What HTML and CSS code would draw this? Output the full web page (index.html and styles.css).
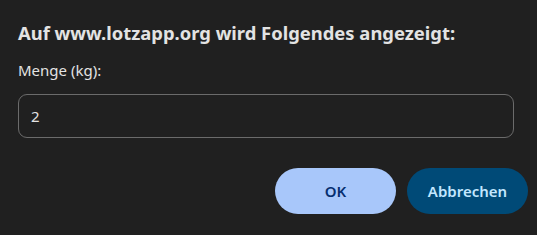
FILE: index.html
```
<!DOCTYPE html>
<html lang="de">
  <head>
    <meta charset="utf-8">
    <title>Prompt</title>
    <link rel="stylesheet" href="styles.css">
  </head>
  <body>
    <div class="dialog">
      <h1 class="title">Auf www.lotzapp.org wird Folgendes angezeigt:</h1>
      <p class="message">Menge (kg):</p>
      <input class="answer" type="text" value="2">
      <div class="buttons">
        <button class="btn ok">OK</button>
        <button class="btn cancel">Abbrechen</button>
      </div>
    </div>
  </body>
</html>
```

FILE: styles.css
```
html, body {
  margin: 0;
  background: #202020;
}

.dialog {
  width: 537px;
  height: 235px;
  box-sizing: border-box;
  padding: 21px 9px 0 18px;
  font-family: "Noto Sans", sans-serif;
  color: #e3e3e3;
}

.title {
  margin: 0;
  font-size: 18.4px;
  font-weight: bold;
  line-height: 24px;
}

.message {
  margin: 15px 0 0 0;
  font-size: 15px;
  line-height: 20px;
}

.answer {
  display: block;
  margin-top: 14px;
  width: 496px;
  height: 44px;
  box-sizing: border-box;
  border: 1px solid #6b6b6b;
  border-radius: 9px;
  background: #202020;
  color: #e3e3e3;
  font-family: "Noto Sans", sans-serif;
  font-size: 15px;
  padding: 0 12px;
  outline: 0;
}

.buttons {
  display: flex;
  justify-content: flex-end;
  gap: 11px;
  margin-top: 30px;
}

.btn {
  width: 121px;
  height: 46px;
  border: none;
  border-radius: 23px;
  font-family: "Noto Sans", sans-serif;
  font-size: 15px;
  font-weight: 600;
  cursor: pointer;
}

.ok {
  background: #a8c7fa;
  color: #062e6f;
}

.cancel {
  background: #004a77;
  color: #c2e7ff;
}
```
